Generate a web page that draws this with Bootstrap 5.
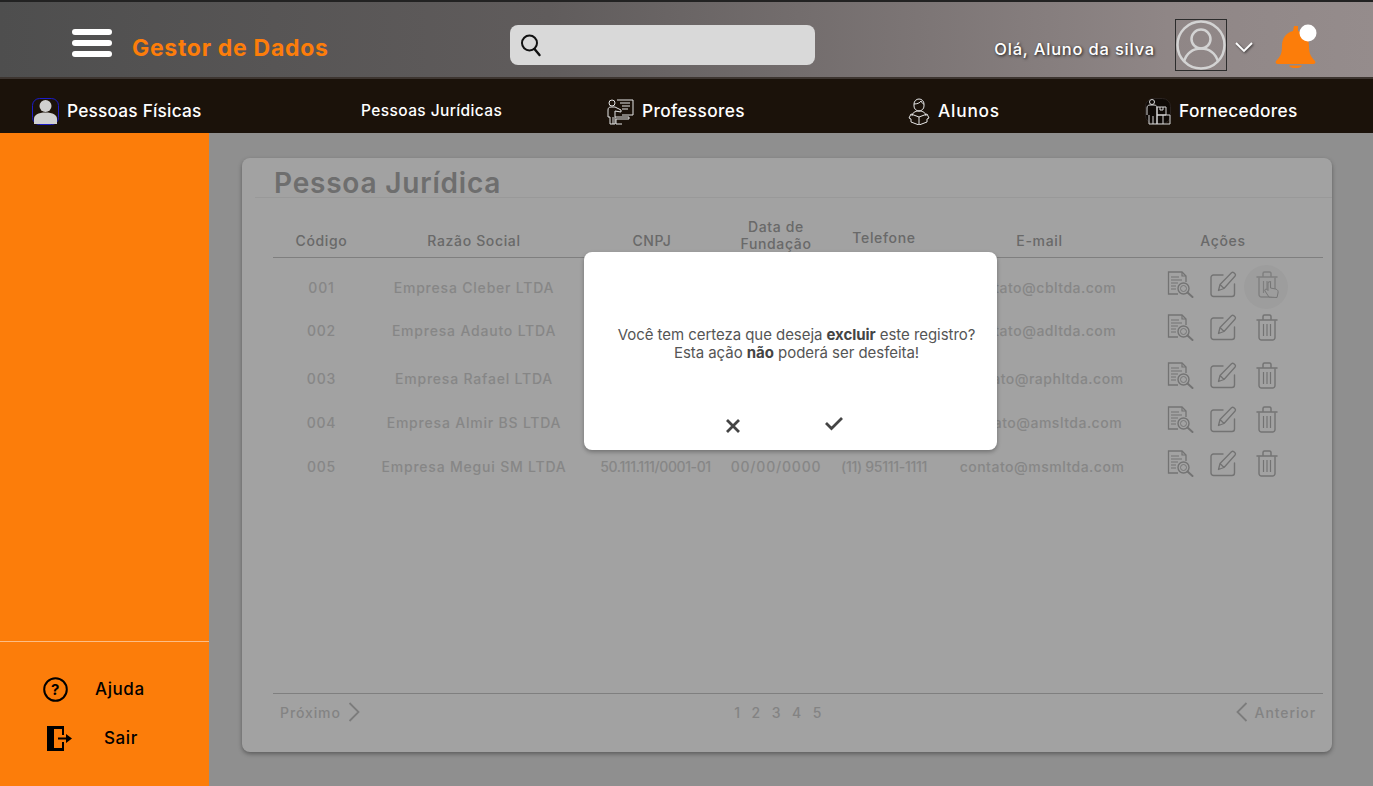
<!DOCTYPE html>
<html lang="pt-BR">
<head>
  <meta charset="UTF-8">
  <meta name="viewport" content="width=device-width, initial-scale=1.0">
  <title>Gestor de Dados - Pessoa Jurídica</title>
  <link href="https://cdn.jsdelivr.net/npm/bootstrap@5.3.0/dist/css/bootstrap.min.css" rel="stylesheet">
  <style>
    html, body { height: 100%; }
    body {
      font-family: Inter, "Liberation Sans", sans-serif;
      overflow: hidden;
      background: #e1e1e1;
    }
    .page { height: 786px; }

    /* top bar */
    .topbar {
      height: 79px;
      flex-wrap: nowrap;
      padding: 12px 56px 0 72px;
      border-top: 2px solid #222;
      border-bottom: 2px solid #3d3530;
      background: linear-gradient(90deg, #4e4e4e 0%, #605c5c 40%, #8f8686 85%, #958c8c 100%);
    }
    .burger { width: 40px; margin-top: -5px; }
    .burger span { display: block; height: 6px; background: #fff; border-radius: 3px; margin-bottom: 5px; }
    .brand-name {
      width: 378px; margin-left: 20px; margin-top: 5px;
      color: #fc7d0a; font-size: 23px; font-weight: 700; letter-spacing: .7px;
    }
    .search-box {
      width: 305px; height: 40px; margin-top: -2px; padding-left: 10px;
      background: #d9d9d9; border-radius: 8px;
    }
    .greeting {
      color: #fff; font-size: 16.5px; font-weight: 500; letter-spacing: .8px;
      text-shadow: 1px 1px 3px rgba(0,0,0,.8); margin-top: 7px;
    }
    .avatar-box { width: 52px; height: 52px; margin-left: 20px; margin-top: -2px; border: 1px solid #2c2c2c; }
    .chevron-down { margin-left: 7px; margin-top: 3px; filter: drop-shadow(1px 1px 1px rgba(0,0,0,.6)); }
    .bell-wrap { margin-left: 21px; margin-top: 1px; }

    /* menu */
    .menu-bar {
      height: 54px;
      background: #1b120a;
      display: grid;
      grid-template-columns: 329px 246px 301px 237px 1fr;
      padding: 10px 0 0 32px;
      align-items: center;
    }
    .menu-bar a {
      color: #fff; text-decoration: none; font-size: 17.3px; font-weight: 500; letter-spacing: .35px;
      display: flex; align-items: center;
    }
    .menu-bar a.menu-small { font-size: 15.5px; letter-spacing: .4px; }
    .menu-bar a.menu-tight { letter-spacing: .2px; }
    .menu-bar a.menu-wide { letter-spacing: .8px; }

    /* side */
    .content-area { height: 653px; }
    .side-panel { width: 209px; flex-shrink: 0; background: #fc7d0a; }
    .side-foot { height: 145px; border-top: 1px solid #fdbd85; }
    .side-link { color: #000; text-decoration: none; font-size: 17px; font-weight: 500; letter-spacing: .6px; }
    .side-help { margin-top: 35px; padding-left: 43px; }
    .side-help span { margin-left: 27px; }
    .side-exit { margin-top: 23px; padding-left: 47px; }
    .side-exit span { margin-left: 32px; }

    /* main */
    .main-area { position: relative; background: #e1e1e1; padding: 25px 41px 34px 33px; }
    .data-card {
      height: 594px; border: 0; border-radius: 8px;
      box-shadow: 0 2px 4px rgba(0,0,0,.35);
    }
    .card-title-bar {
      height: 40px; margin-left: 13px; padding-left: 19px;
      border-bottom: 1px solid #f1f1f1;
    }
    .card-title-bar h1 { font-size: 28px; font-weight: 600; color: #adadad; line-height: 50px; margin: 0; letter-spacing: .8px; }
    .table-wrap { margin: 18px 9px 0 31px; flex-grow: 1; }
    .data-table { table-layout: fixed; width: 1050px; margin: 0; font-size: 14px; letter-spacing: .8px; }
    .data-table th {
      height: 41px; padding: 0 0 8px; border-bottom: 1px solid #c9c9c9; vertical-align: bottom;
      color: #a6a6a6; font-weight: 500; text-align: center; line-height: 17px; background: transparent;
      letter-spacing: .65px;
    }
    .data-table th.th-raised { padding-bottom: 11px; }
    .data-table th.th-data { padding-bottom: 5px; }
    .data-table th.th-left { padding-right: 14px; }
    .data-table td {
      padding: 20px 0 0; border: 0; color: #d4d4d4; line-height: 20px; text-align: center;
      vertical-align: top; background: transparent; white-space: nowrap; font-weight: 500;
    }
    .data-table td.td-cnpj { padding-left: 7px; letter-spacing: -.4px; }
    .data-table td.td-tel { letter-spacing: -.3px; }
    .data-table td.td-mail { padding-left: 5px; letter-spacing: .5px; }
    .data-table td.td-acts { padding: 13px 0 0 30px; text-align: left; }
    .h-44 td { height: 44px; }
    .h-48 td { height: 48px; }
    .act-icons { position: relative; display: flex; color: #b6b6b6; }
    .act-icons svg { display: block; }
    .act-edit { margin-left: 16px; }
    .act-trash { margin-left: 19px; }
    .hover-dot {
      position: absolute; left: 77px; top: -6px; width: 44px; height: 44px;
      border-radius: 50%; background: #f8f8f8;
    }
    .act-trash-hover { position: relative; overflow: visible; color: #c9c9c9; }
    .hand-cursor { fill: #f8f8f8; stroke: #bababa; stroke-width: 1; stroke-linejoin: round; }

    .pager {
      height: 59px; margin: 0 9px 0 31px; padding: 0 7px 22px;
      border-top: 1px solid #c9c9c9; color: #cfcfcf;
      font-size: 14px; font-weight: 500; letter-spacing: .9px;
    }
    .pager-side { width: 120px; }
    .pager-nums { gap: 11px; margin-left: -6px; margin-right: 34px; letter-spacing: .5px; }
    .pager-prev { gap: 7px; }

    /* backdrop + dialog */
    .dim-layer {
      position: absolute; inset: 0;
      background: rgba(0,0,0,.365);
      padding: 119px 2px 0 0;
    }
    .confirm-box {
      width: 413px; height: 198px; background: #fff; border-radius: 8px;
      box-shadow: 0 2px 4px rgba(0,0,0,.3);
      color: #555; font-size: 15px; line-height: 18px; letter-spacing: -.05px;
      text-align: center;
    }
    .confirm-box p { margin: 74px 0 0; padding-left: 13px; }
    .confirm-box b { font-weight: 700; color: #444; }
    .confirm-actions { margin-top: 56px; padding-left: 141px; }
    .confirm-actions button { background: none; border: 0; padding: 0; display: block; }
    .confirm-actions button + button { margin-left: 83px; margin-top: -3px; }
  </style>
</head>
<body>
  <svg width="0" height="0" class="position-absolute">
    <symbol id="ic-doc" viewBox="0 0 27 27">
      <path d="M19 11V5l-4-4H1.5v22H11" fill="none" stroke="currentColor" stroke-width="1.3"/>
      <path d="M15 1v4h4M4 6h8M4 9h11M4 12h7M4 15h5M4 18h5" fill="none" stroke="currentColor" stroke-width="1.2"/>
      <circle cx="16.5" cy="17.5" r="5.5" fill="none" stroke="currentColor" stroke-width="1.4"/>
      <circle cx="16.5" cy="17.5" r="3" fill="none" stroke="currentColor" stroke-width=".9"/>
      <path d="M20.5 21.5l5 4.5" stroke="currentColor" stroke-width="2" stroke-linecap="round"/>
    </symbol>
    <symbol id="ic-edit" viewBox="0 0 27 27">
      <path d="M13 4H3.5A2.5 2.5 0 0 0 1 6.500V23a2.500 2.500 0 0 0 2.500 2.500H22a2.500 2.500 0 0 0 2.500-2.500V13" fill="none" stroke="currentColor" stroke-width="1.4" stroke-linecap="round"/>
      <path d="M8.500 19.500l1.500-6L21.500 1.800a1.700 1.700 0 0 1 2.400 0l1 1a1.700 1.700 0 0 1 0 2.400L14 17.500zM10 13.500l4 4" fill="none" stroke="currentColor" stroke-width="1.300" stroke-linejoin="round"/>
    </symbol>
    <symbol id="ic-trash" viewBox="0 0 22 27">
      <path d="M1 6h20M7 5V2.500A1.500 1.500 0 0 1 8.500 1h5A1.500 1.500 0 0 1 15 2.500V5" fill="none" stroke="currentColor" stroke-width="1.500" stroke-linecap="round"/>
      <path d="M3 6.500V23.500A2.500 2.500 0 0 0 5.500 26h11a2.500 2.500 0 0 0 2.500-2.500V6.500" fill="none" stroke="currentColor" stroke-width="1.400"/>
      <path d="M7.500 10v12M11 10v12M14.500 10v12" stroke="currentColor" stroke-width="1.200"/>
    </symbol>
  </svg>

  <div class="page d-flex flex-column">
    <header class="navbar topbar align-items-center justify-content-start">
      <div class="burger"><span></span><span></span><span class="mb-0"></span></div>
      <div class="brand-name">Gestor de Dados</div>
      <div class="search-box d-flex align-items-center">
        <svg width="22" height="24" viewBox="0 0 22 24"><circle cx="9.500" cy="10" r="7.500" fill="none" stroke="#111" stroke-width="2"/><path d="M14.500 16l5 6" stroke="#111" stroke-width="2.400" stroke-linecap="round"/></svg>
      </div>
      <div class="greeting ms-auto">Olá, Aluno da silva</div>
      <div class="avatar-box">
        <svg width="50" height="50" viewBox="0 0 50 50" class="d-block"><g fill="none" stroke="#d3d3d3" stroke-width="2.500"><circle cx="25" cy="25" r="23.500"/><circle cx="25" cy="19" r="9.500"/><path d="M8 42c2-9 9-13.500 17-13.500S40 33 42 42"/></g></svg>
      </div>
      <svg class="chevron-down" width="20" height="13" viewBox="0 0 20 13"><path d="M2 2l8 8 8-8" fill="none" stroke="#fff" stroke-width="1.800"/></svg>
      <div class="bell-wrap">
        <svg width="42" height="44" viewBox="0 0 42 44" class="d-block">
          <path d="M19 0h4v5c7 1.500 11 7.500 11 15 0 8 2 11 6 15 1 2 0 3-2 3H3c-2 0-3-1-2-3 4-4 6-7 6-15 0-7.500 4-13.500 11-15z" fill="#fc7d0a" transform="translate(0 2)"/>
          <path d="M14 41.500h13c-1 2-3 2.500-6.500 2.500S15 43.500 14 41.500z" fill="#fc7d0a"/>
          <circle cx="33" cy="9" r="8.500" fill="#fff"/>
        </svg>
      </div>
    </header>

    <nav class="menu-bar">
      <a href="#" class="menu-tight">
        <svg width="27" height="27" viewBox="0 0 27 27" class="me-2"><rect x=".5" y=".5" width="26" height="26" rx="7" fill="none" stroke="#1c1cc8"/><circle cx="13.500" cy="8" r="6" fill="#d0d0d0"/><path d="M2 26v-5c0-4 4-6.500 11.500-6.500S25 17 25 21v5z" fill="#d0d0d0"/></svg>
        Pessoas Físicas
      </a>
      <a href="#" class="menu-small">Pessoas Jurídicas</a>
      <a href="#">
        <svg width="27" height="27" viewBox="0 0 27 27" class="me-2"><g fill="none" stroke="#e6e6e6" stroke-width="1"><circle cx="5" cy="5" r="3"/><path d="M10 2h16v15H15M13 5h10M15 8h8M15 11h6"/><path d="M1 19v-7c0-2 1-3 3-3h4l6 3v2l-6-1v13H3v-7zM6 19v7M8 19h14v2H9v5h6"/></g></svg>
        Professores
      </a>
      <a href="#" class="menu-wide">
        <svg width="22" height="27" viewBox="0 0 22 27" class="me-2 ms-0"><g fill="none" stroke="#e6e6e6" stroke-width="1"><path d="M6 6a5 5 0 0 1 10 0v2a5 5 0 0 1-10 0z"/><path d="M6 6c3 0 6-1 7-3 1 2 2 3 3 3"/><path d="M4 18c0-3 3-5 7-5s7 2 7 5"/><path d="M11 19l-8-3-2 4 2 1v3l8 3 8-3v-3l2-1-2-4zM11 19v8"/></g></svg>
        Alunos
      </a>
      <a href="#">
        <svg width="26" height="27" viewBox="0 0 26 27" class="me-2"><rect x=".5" y=".5" width="25" height="25" rx="8" fill="#0e0906" stroke="#2a2320"/><g fill="none" stroke="#d6d6d6" stroke-width="1"><circle cx="7" cy="4" r="2.500"/><path d="M2 17V10c0-2 1-3 3-3h4c2 0 3 1 3 3v16H4v-9M8 18v8"/><path d="M12 9h9v8h-9zM15 9v3h3V9M12 17h13v9H12zM18 17v9"/></g></svg>
        Fornecedores
      </a>
    </nav>

    <div class="content-area d-flex">
      <aside class="side-panel d-flex flex-column justify-content-end">
        <div class="side-foot">
          <a href="#" class="side-link side-help d-flex align-items-center">
            <svg width="25" height="25" viewBox="0 0 25 25"><circle cx="12.500" cy="12.500" r="11.300" fill="none" stroke="#000" stroke-width="2"/><text x="12.500" y="18" text-anchor="middle" font-size="15" font-weight="700" font-family="Inter, sans-serif">?</text></svg>
            <span>Ajuda</span>
          </a>
          <a href="#" class="side-link side-exit d-flex align-items-center">
            <svg width="25" height="25" viewBox="0 0 25 25"><path d="M0 0h17v9h-2V3H7l-.5 0v19H15v-6h2v9H0z" fill="#000"/><path d="M2 2l5 1v19l-5 1z" fill="#000"/><path d="M11 11.500h8V8l6 4.500-6 4.500v-3.500h-8z" fill="#000"/></svg>
            <span>Sair</span>
          </a>
        </div>
      </aside>

      <main class="main-area flex-grow-1">
        <div class="card data-card d-flex flex-column">
          <div class="card-title-bar"><h1>Pessoa Jurídica</h1></div>
          <div class="table-wrap">
            <table class="table data-table">
              <colgroup><col style="width:97px"><col style="width:208px"><col style="width:148px"><col style="width:100px"><col style="width:116px"><col style="width:195px"><col style="width:186px"></colgroup>
              <thead>
                <tr>
                  <th>Código</th><th>Razão Social</th><th>CNPJ</th><th class="th-data">Data de Fundação</th><th class="th-raised">Telefone</th><th>E-mail</th><th class="th-left">Ações</th>
                </tr>
              </thead>
              <tbody>
                <tr class="h-44">
                  <td>001</td><td>Empresa Cleber LTDA</td><td class="td-cnpj">50.111.111/0001-01</td><td>00/00/0000</td><td class="td-tel">(11) 95111-1111</td><td class="td-mail">contato@cbltda.com</td>
                  <td class="td-acts"><div class="act-icons">
                    <span class="hover-dot"></span>
                    <svg width="27" height="27"><use href="#ic-doc"/></svg>
                    <svg class="act-edit" width="27" height="27"><use href="#ic-edit"/></svg>
                    <svg class="act-trash act-trash-hover" width="22" height="27"><use href="#ic-trash"/><path class="hand-cursor" d="M13 26l-4-6c-1-1.500 1-2.500 2-1.500l1 1V12c0-1.800 2.500-1.800 2.500 0v5l5 1c2 .5 3 2 2.500 4l-1 4.500z"/></svg>
                  </div></td>
                </tr>
                <tr class="h-48">
                  <td>002</td><td>Empresa Adauto LTDA</td><td class="td-cnpj">50.111.111/0001-01</td><td>00/00/0000</td><td class="td-tel">(11) 95111-1111</td><td class="td-mail">contato@adltda.com</td>
                  <td class="td-acts"><div class="act-icons">
                    <svg width="27" height="27"><use href="#ic-doc"/></svg>
                    <svg class="act-edit" width="27" height="27"><use href="#ic-edit"/></svg>
                    <svg class="act-trash" width="22" height="27"><use href="#ic-trash"/></svg>
                  </div></td>
                </tr>
                <tr class="h-44">
                  <td>003</td><td>Empresa Rafael LTDA</td><td class="td-cnpj">50.111.111/0001-01</td><td>00/00/0000</td><td class="td-tel">(11) 95111-1111</td><td class="td-mail">contato@raphltda.com</td>
                  <td class="td-acts"><div class="act-icons">
                    <svg width="27" height="27"><use href="#ic-doc"/></svg>
                    <svg class="act-edit" width="27" height="27"><use href="#ic-edit"/></svg>
                    <svg class="act-trash" width="22" height="27"><use href="#ic-trash"/></svg>
                  </div></td>
                </tr>
                <tr class="h-44">
                  <td>004</td><td>Empresa Almir BS LTDA</td><td class="td-cnpj">50.111.111/0001-01</td><td>00/00/0000</td><td class="td-tel">(11) 95111-1111</td><td class="td-mail">contato@amsltda.com</td>
                  <td class="td-acts"><div class="act-icons">
                    <svg width="27" height="27"><use href="#ic-doc"/></svg>
                    <svg class="act-edit" width="27" height="27"><use href="#ic-edit"/></svg>
                    <svg class="act-trash" width="22" height="27"><use href="#ic-trash"/></svg>
                  </div></td>
                </tr>
                <tr class="h-44">
                  <td>005</td><td>Empresa Megui SM LTDA</td><td class="td-cnpj">50.111.111/0001-01</td><td>00/00/0000</td><td class="td-tel">(11) 95111-1111</td><td class="td-mail">contato@msmltda.com</td>
                  <td class="td-acts"><div class="act-icons">
                    <svg width="27" height="27"><use href="#ic-doc"/></svg>
                    <svg class="act-edit" width="27" height="27"><use href="#ic-edit"/></svg>
                    <svg class="act-trash" width="22" height="27"><use href="#ic-trash"/></svg>
                  </div></td>
                </tr>
              </tbody>
            </table>
          </div>
          <div class="pager d-flex justify-content-between align-items-center">
            <div class="pager-side pager-prev d-flex align-items-center">Próximo
              <svg width="12" height="20" viewBox="0 0 12 20"><path d="M1.500 1l9 9-9 9" fill="none" stroke="#c4c4c4" stroke-width="1.800"/></svg>
            </div>
            <div class="pager-nums d-flex"><span>1</span><span>2</span><span>3</span><span>4</span><span>5</span></div>
            <div class="pager-side pager-prev d-flex align-items-center justify-content-end">
              <svg width="12" height="20" viewBox="0 0 12 20"><path d="M10.500 1l-9 9 9 9" fill="none" stroke="#c4c4c4" stroke-width="1.800"/></svg>
              Anterior
            </div>
          </div>
        </div>

        <div class="dim-layer d-flex justify-content-center align-items-start">
          <div class="confirm-box">
            <p>Você tem certeza que deseja <b>excluir</b> este registro?<br>Esta ação <b>não</b> poderá ser desfeita!</p>
            <div class="confirm-actions d-flex align-items-start">
              <button type="button" aria-label="Cancelar"><svg width="16" height="16" viewBox="0 0 16 16" class="d-block"><path d="M2 2l12 12M14 2L2 14" stroke="#444" stroke-width="2.800"/></svg></button>
              <button type="button" aria-label="Confirmar"><svg width="20" height="16" viewBox="0 0 20 16" class="d-block"><path d="M2 8l5.500 5.500L18 3" fill="none" stroke="#444" stroke-width="2.800"/></svg></button>
            </div>
          </div>
        </div>
      </main>
    </div>
  </div>
</body>
</html>
